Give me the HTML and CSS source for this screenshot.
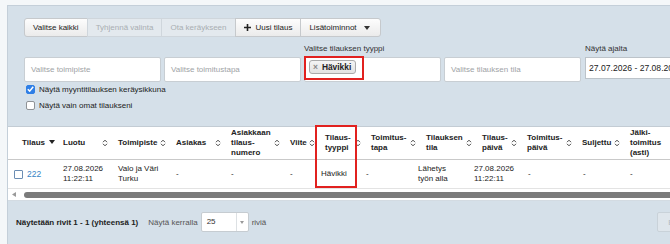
FILE: index.html
```html
<!DOCTYPE html>
<html lang="fi">

<head>
    <meta charset="UTF-8">
    <meta name="viewport" content="width=device-width, initial-scale=1.0">
    <title>Tilaukset</title>
    <link rel="stylesheet" href="styles.css">
</head>

<body>
    <div class="panel">
        <div class="filters">
            <div class="btn-group">
                <button class="btn">Valitse kaikki</button>
                <button class="btn disabled">Tyhjennä valinta</button>
                <button class="btn disabled">Ota keräykseen</button>
                <button class="btn">
                    <svg width="7" height="7" viewBox="0 0 7 7"><path d="M3.5 0v7M0 3.5h7" stroke="#222" stroke-width="1.6"/></svg>
                    Uusi tilaus
                </button>
                <button class="btn">
                    Lisätoiminnot
                    <svg width="6" height="4" viewBox="0 0 6 4"><path d="M0 0h6L3 4z" fill="#333"/></svg>
                </button>
            </div>

            <div class="filter-row">
                <div class="field">
                    <div class="field-label"></div>
                    <div class="select placeholder">Valitse toimipiste</div>
                </div>
                <div class="field">
                    <div class="field-label"></div>
                    <div class="select placeholder">Valitse toimitustapa</div>
                </div>
                <div class="field">
                    <div class="field-label">Valitse tilauksen tyyppi</div>
                    <div class="select tags">
                        <span class="tag"><span class="tag-x">×</span>Hävikki</span>
                        <span class="mark type-mark"></span>
                    </div>
                </div>
                <div class="field">
                    <div class="field-label"></div>
                    <div class="select placeholder">Valitse tilauksen tila</div>
                </div>
                <div class="field date-field">
                    <div class="field-label">Näytä ajalta</div>
                    <div class="date-input">27.07.2026 - 27.08.2026</div>
                </div>
            </div>

            <div class="check-row first">
                <span class="check checked">
                    <svg width="7" height="6" viewBox="0 0 7 6"><path d="M0.8 3.2l1.9 1.9L6.2 0.8" fill="none" stroke="#fff" stroke-width="1.5"/></svg>
                </span>
                Näytä myyntitilauksen keräysikkuna
            </div>
            <div class="check-row">
                <span class="check"></span>
                Näytä vain omat tilaukseni
            </div>
        </div>

        <div class="table-wrap">
            <div class="grid head">
                <div class="th first">Tilaus <svg class="caret" width="6" height="4" viewBox="0 0 6 4"><path d="M0 0h6L3 4z" fill="#222"/></svg></div>
                <div class="th">Luotu <svg class="sort" width="6" height="8" viewBox="0 0 6 8"><path d="M1 3.2L3 1.2l2 2M1 4.8l2 2 2-2" fill="none" stroke="#444"/></svg></div>
                <div class="th">Toimipiste <svg class="sort" width="6" height="8" viewBox="0 0 6 8"><path d="M1 3.2L3 1.2l2 2M1 4.8l2 2 2-2" fill="none" stroke="#444"/></svg></div>
                <div class="th">Asiakas <svg class="sort" width="6" height="8" viewBox="0 0 6 8"><path d="M1 3.2L3 1.2l2 2M1 4.8l2 2 2-2" fill="none" stroke="#444"/></svg></div>
                <div class="th">Asiakkaan<br>tilaus-<br>numero <svg class="sort" width="6" height="8" viewBox="0 0 6 8"><path d="M1 3.2L3 1.2l2 2M1 4.8l2 2 2-2" fill="none" stroke="#444"/></svg></div>
                <div class="th">Viite <svg class="sort" width="6" height="8" viewBox="0 0 6 8"><path d="M1 3.2L3 1.2l2 2M1 4.8l2 2 2-2" fill="none" stroke="#444"/></svg></div>
                <div class="th">Tilaus-<br>tyyppi <svg class="sort" width="6" height="8" viewBox="0 0 6 8"><path d="M1 3.2L3 1.2l2 2M1 4.8l2 2 2-2" fill="none" stroke="#444"/></svg></div>
                <div class="th">Toimitus-<br>tapa <svg class="sort" width="6" height="8" viewBox="0 0 6 8"><path d="M1 3.2L3 1.2l2 2M1 4.8l2 2 2-2" fill="none" stroke="#444"/></svg></div>
                <div class="th">Tilauksen<br>tila <svg class="sort" width="6" height="8" viewBox="0 0 6 8"><path d="M1 3.2L3 1.2l2 2M1 4.8l2 2 2-2" fill="none" stroke="#444"/></svg></div>
                <div class="th">Tilaus-<br>päivä <svg class="sort" width="6" height="8" viewBox="0 0 6 8"><path d="M1 3.2L3 1.2l2 2M1 4.8l2 2 2-2" fill="none" stroke="#444"/></svg></div>
                <div class="th">Toimitus-<br>päivä <svg class="sort" width="6" height="8" viewBox="0 0 6 8"><path d="M1 3.2L3 1.2l2 2M1 4.8l2 2 2-2" fill="none" stroke="#444"/></svg></div>
                <div class="th">Suljettu <svg class="sort" width="6" height="8" viewBox="0 0 6 8"><path d="M1 3.2L3 1.2l2 2M1 4.8l2 2 2-2" fill="none" stroke="#444"/></svg></div>
                <div class="th">Jälki-<br>toimitus<br>(asti) <svg class="sort" width="6" height="8" viewBox="0 0 6 8"><path d="M1 3.2L3 1.2l2 2M1 4.8l2 2 2-2" fill="none" stroke="#444"/></svg></div>
            </div>

            <div class="grid body">
                <div class="td first"><span class="row-check"></span><a href="#" class="order-link">222</a></div>
                <div class="td">27.08.2026<br>11:22:11</div>
                <div class="td">Valo ja Väri<br>Turku</div>
                <div class="td">-</div>
                <div class="td">-</div>
                <div class="td">-</div>
                <div class="td">Hävikki</div>
                <div class="td">-</div>
                <div class="td">Lähetys<br>työn alla</div>
                <div class="td">27.08.2026<br>11:22:11</div>
                <div class="td">-</div>
                <div class="td">-</div>
                <div class="td">-</div>
            </div>

            <div class="hscroll">
                <svg width="4" height="5" viewBox="0 0 4 5"><path d="M4 0v5L0 2.5z" fill="#9a9a9a"/></svg>
                <div class="thumb"></div>
            </div>

            <span class="mark col-mark"></span>
        </div>

        <div class="footer">
            <div class="footer-info">
                <span class="count">Näytetään rivit 1 - 1 (yhteensä 1)</span>
                <span class="per-page">Näytä kerralla</span>
                <div class="page-size">
                    <span class="page-size-value">25</span>
                    <span class="page-size-arrow">
                        <svg width="4" height="3" viewBox="0 0 4 3"><path d="M0 0h4L2 3z" fill="#999"/></svg>
                    </span>
                </div>
                <span class="per-page">riviä</span>
            </div>
            <button class="pager-btn">Ensimmäinen</button>
        </div>
    </div>
</body>

</html>
```

FILE: styles.css
```css
body {
    margin: 0;
    background-color: #f4f7f9;
    font-family: "Liberation Sans", Arial, sans-serif;
    font-size: 8px;
    color: #222;
    overflow: hidden;
}

.panel {
    width: 720px;
    margin: 5px 0 0 7px;
    background-color: #d5e0e9;
    border-top: 1px solid #c4cfd9;
    border-left: 1px solid #c4cfd9;
}

/* filter area */

.filters {
    padding: 12px 0 16px 16px;
}

.btn-group {
    display: flex;
}

.btn {
    display: flex;
    align-items: center;
    gap: 5px;
    height: 19px;
    padding: 0 8px;
    margin-left: -1px;
    font-family: inherit;
    font-size: 8px;
    color: #222;
    background: linear-gradient(#fdfdfd, #ebebeb);
    border: 1px solid #c6c9cc;
}

.btn:first-child {
    margin-left: 0;
    border-radius: 3px 0 0 3px;
}

.btn:last-child {
    border-radius: 0 3px 3px 0;
    gap: 7px;
    padding-right: 10px;
}

.btn.disabled {
    color: #a9aeb2;
    background: #e3e9ee;
    border-color: #cfd6dc;
}

.filter-row {
    display: flex;
    gap: 3px;
    margin-top: 7px;
}

.field {
    width: 137px;
}

.field-label {
    height: 10px;
    line-height: 10px;
    margin-bottom: 3px;
    color: #333;
    white-space: nowrap;
}

.select {
    position: relative;
    box-sizing: border-box;
    height: 25px;
    background-color: #fff;
    border: 1px solid #c8ced3;
    border-radius: 2px;
}

.select.placeholder {
    line-height: 23px;
    padding-left: 6px;
    color: #a0a3a6;
}

.select.tags {
    padding: 2px 0 0 4px;
}

.tag {
    display: inline-flex;
    align-items: center;
    gap: 4px;
    height: 14px;
    padding: 0 4px 0 3px;
    box-sizing: border-box;
    font-size: 8.4px;
    font-weight: bold;
    color: #222;
    background: linear-gradient(#f4f4f4, #e2e2e2);
    border: 1px solid #aaa;
    border-radius: 3px;
}

.tag-x {
    font-weight: bold;
    color: #888;
}

.date-field {
    width: 120px;
    margin-left: 1px;
}

.date-input {
    box-sizing: border-box;
    height: 22px;
    line-height: 20px;
    padding-left: 3px;
    font-size: 8.6px;
    color: #222;
    background-color: #fff;
    border: 1px solid #bcc3c9;
    white-space: nowrap;
}

.check-row {
    display: flex;
    align-items: center;
    gap: 4px;
    height: 10px;
    margin-top: 6px;
    padding-left: 2px;
}

.check-row.first {
    margin-top: 2px;
}

.check {
    display: flex;
    align-items: center;
    justify-content: center;
    box-sizing: border-box;
    width: 9px;
    height: 9px;
    background-color: #fff;
    border: 1px solid #8f9397;
    border-radius: 2px;
}

.check.checked {
    background-color: #2f7fe6;
    border-color: #2f7fe6;
}

/* annotation boxes */

.mark {
    position: absolute;
    box-sizing: border-box;
    border: 2px solid #e1211f;
}

.type-mark {
    left: -1px;
    top: -2px;
    width: 60px;
    height: 24px;
}

.col-mark {
    left: 307px;
    top: -2px;
    width: 42px;
    height: 63px;
}

/* table */

.table-wrap {
    position: relative;
    background-color: #fff;
    border-top: 1px solid #c3ccd4;
    border-bottom: 1px solid #d3dbe2;
}

.grid {
    display: grid;
}

.grid.head {
    grid-template-columns: 50px 55px 58px 55px 59px 35px 46px 55px 56px 45px 55px 48px 65px;
    height: 32px;
    border-bottom: 1px solid #c9c9c9;
}

.grid.body {
    grid-template-columns: 50px 55px 58px 55px 59px 31px 45px 52px 56px 54px 55px 47px 65px;
    height: 28px;
    border-bottom: 1px solid #e3e3e3;
}

.th {
    display: flex;
    align-items: center;
    padding: 0 5px;
    font-weight: bold;
    line-height: 10px;
    color: #222;
    white-space: nowrap;
}

.th .sort {
    margin-left: auto;
    flex-shrink: 0;
}

.th.first {
    display: block;
    align-self: center;
    padding: 0 0 0 14px;
}

.th .caret {
    display: inline-block;
    vertical-align: middle;
    margin: -2px 0 0 2px;
}

.td {
    display: flex;
    align-items: center;
    padding: 0 5px;
    line-height: 10px;
    color: #222;
    white-space: nowrap;
}

.td.first {
    padding-left: 6px;
    gap: 4px;
}

.row-check {
    box-sizing: border-box;
    width: 9px;
    height: 9px;
    border: 1px solid #6b8db3;
    border-radius: 1px;
}

.order-link {
    font-size: 8.5px;
    color: #3684c6;
    text-decoration: none;
}

.hscroll {
    display: flex;
    align-items: center;
    gap: 8px;
    height: 11px;
    padding-left: 4px;
}

.thumb {
    flex-grow: 1;
    height: 6px;
    background-color: #7b7b7b;
    border-radius: 3px 0 0 3px;
}

/* footer */

.footer {
    display: grid;
    grid-template-columns: 641px auto;
    align-items: center;
    padding: 11px 0 12px 8px;
}

.footer-info {
    display: flex;
    align-items: center;
}

.count {
    font-weight: bold;
    color: #222;
    margin-right: 10px;
}

.per-page {
    color: #555;
}

.page-size {
    display: flex;
    box-sizing: border-box;
    width: 48px;
    height: 20px;
    margin: 0 3px;
    background-color: #fff;
    border: 1px solid #c6ccd1;
    border-radius: 2px;
}

.page-size-value {
    flex-grow: 1;
    line-height: 18px;
    padding-left: 5px;
    color: #333;
}

.page-size-arrow {
    display: flex;
    align-items: center;
    justify-content: center;
    width: 11px;
    border-left: 1px solid #dde1e4;
}

.pager-btn {
    height: 20px;
    padding: 0 5px;
    font-family: inherit;
    font-size: 8px;
    color: #b3bac0;
    background-color: #dfe6ec;
    border: 1px solid #c9d2d9;
    border-radius: 2px;
}
```
